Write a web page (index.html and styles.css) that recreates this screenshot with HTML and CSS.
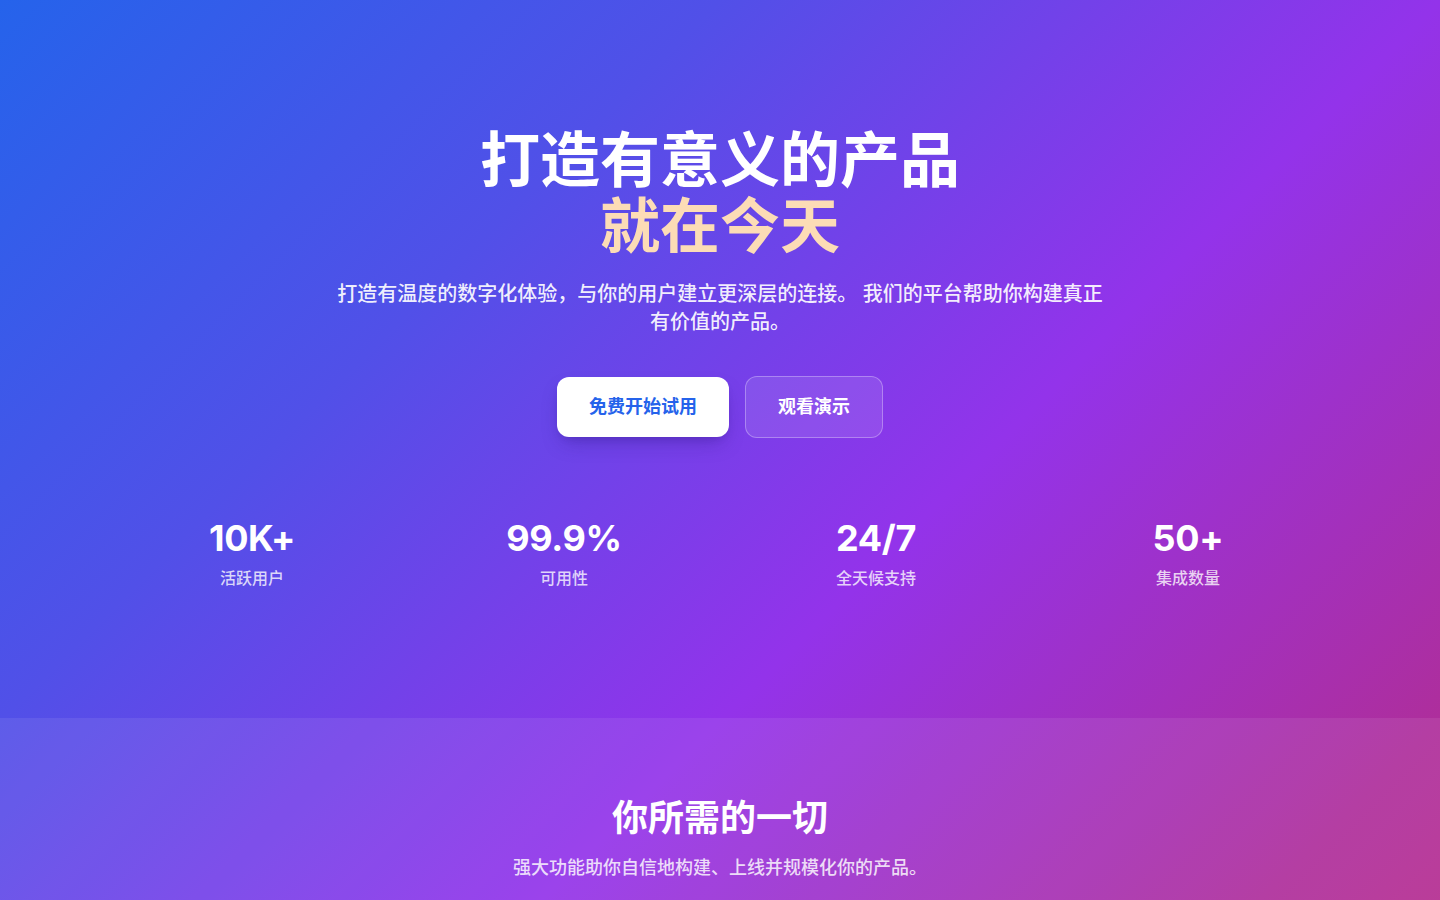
FILE: index.html
```html
<!DOCTYPE html>
<html lang="zh-CN">
<head>
<meta charset="UTF-8">
<title>打造有意义的产品</title>
<link rel="stylesheet" href="styles.css">
</head>
<body>
<main class="page">
  <section class="hero">
    <div class="container hero-inner">
      <h1 class="hero-title">
        <span class="line">打造有意义的产品</span>
        <span class="line accent">就在今天</span>
      </h1>
      <p class="hero-sub">打造有温度的数字化体验，与你的用户建立更深层的连接。 我们的平台帮助你构建真正有价值的产品。</p>
      <div class="actions">
        <a class="btn btn-primary" href="#">免费开始试用</a>
        <a class="btn btn-ghost" href="#">观看演示</a>
      </div>
      <div class="stats">
        <div class="stat">
          <div class="stat-num">10K+</div>
          <div class="stat-label">活跃用户</div>
        </div>
        <div class="stat">
          <div class="stat-num">99.9%</div>
          <div class="stat-label">可用性</div>
        </div>
        <div class="stat">
          <div class="stat-num">24/7</div>
          <div class="stat-label">全天候支持</div>
        </div>
        <div class="stat">
          <div class="stat-num">50+</div>
          <div class="stat-label">集成数量</div>
        </div>
      </div>
    </div>
  </section>
  <section class="features">
    <div class="container features-head">
      <h2 class="features-title">你所需的一切</h2>
      <p class="features-sub">强大功能助你自信地构建、上线并规模化你的产品。</p>
    </div>
  </section>
</main>
</body>
</html>
```

FILE: styles.css
```css
* {
  box-sizing: border-box;
}

html,
body {
  margin: 0;
  padding: 0;
}

body {
  font-family: Inter, "Noto Sans CJK SC", "Noto Sans", sans-serif;
  color: #ffffff;
  background-color: #c0307a;
}

.page {
  background-image: linear-gradient(135deg, #2563eb 0%, #5150e8 25%, #9333ea 50%, #ae2e9c 75%, #c8286f 100%);
  background-size: 100% 1440px;
  background-repeat: no-repeat;
  min-height: 100vh;
}

.container {
  max-width: 1280px;
  margin: 0 auto;
  padding: 0 16px;
}

.hero {
  padding: 127px 0 128px;
}

.hero-inner {
  display: flex;
  flex-direction: column;
  align-items: center;
  text-align: center;
}

.hero-title {
  margin: 0;
  font-size: 60px;
  line-height: 66px;
  font-weight: 700;
  display: flex;
  flex-direction: column;
  align-items: center;
}

.hero-title .accent {
  color: #fcdcb6;
}

.hero-sub {
  margin: 21px 0 0;
  max-width: 768px;
  font-size: 20px;
  line-height: 28px;
  font-weight: 500;
  color: rgba(255, 255, 255, 0.92);
}

.actions {
  margin-top: 40px;
  display: flex;
  gap: 16px;
  align-items: center;
}

.btn {
  display: inline-block;
  padding: 16px 32px;
  font-size: 18px;
  line-height: 28px;
  font-weight: 700;
  border-radius: 12px;
  text-decoration: none;
}

.btn-primary {
  background: #ffffff;
  color: #2563eb;
  box-shadow: 0 10px 20px -6px rgba(40, 20, 120, 0.35), 0 4px 8px -4px rgba(40, 20, 120, 0.2);
}

.btn-ghost {
  color: #ffffff;
  background: rgba(255, 255, 255, 0.1);
  border: 1px solid rgba(255, 255, 255, 0.3);
}

.stats {
  margin-top: 80px;
  width: 100%;
  display: grid;
  grid-template-columns: repeat(4, 1fr);
}

.stat {
  display: flex;
  flex-direction: column;
  align-items: center;
  gap: 8px;
}

.stat-num {
  font-size: 36px;
  line-height: 40px;
  font-weight: 700;
  letter-spacing: -0.3px;
}

.stat-label {
  font-size: 16px;
  line-height: 24px;
  font-weight: 500;
  color: rgba(255, 255, 255, 0.78);
}

.features {
  background: rgba(255, 255, 255, 0.08);
  padding: 80px 0 80px;
}

.features-head {
  text-align: center;
}

.features-title {
  margin: 0;
  font-size: 36px;
  line-height: 40px;
  font-weight: 700;
}

.features-sub {
  margin: 16px 0 0;
  font-size: 18px;
  line-height: 28px;
  font-weight: 500;
  color: rgba(255, 255, 255, 0.82);
}
```
